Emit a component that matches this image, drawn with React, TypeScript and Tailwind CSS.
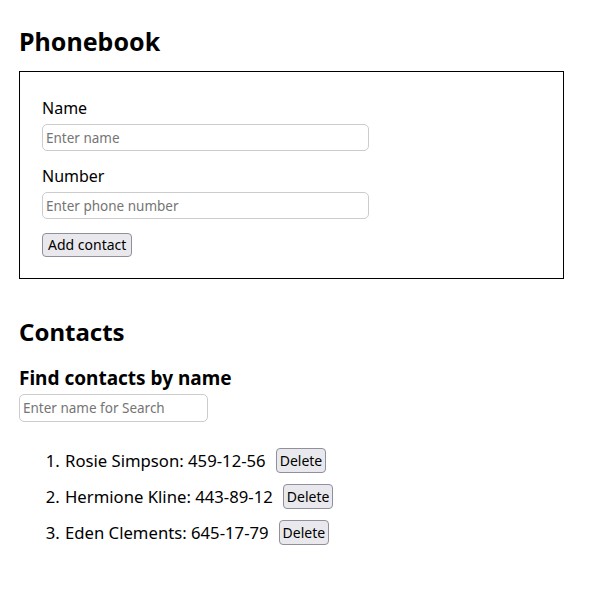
import React from "react";

const contacts = [
  { name: "Rosie Simpson", number: "459-12-56" },
  { name: "Hermione Kline", number: "443-89-12" },
  { name: "Eden Clements", number: "645-17-79" },
];

export default function App() {
  return (
    <div
      className="min-h-[597px] bg-white pl-[19px] pt-[25px] text-black"
      style={{ fontFamily: '"Noto Sans", "Open Sans", sans-serif' }}
    >
      <h1 className="text-[25px] font-bold leading-[32px]">Phonebook</h1>
      <form className="mt-[14px] flex h-[208px] w-[545px] flex-col border border-black px-[22px] pt-[24px]">
        <label className="text-[16px] leading-[24px]">Name</label>
        <input
          placeholder="Enter name"
          className="mt-[4px] h-[27px] w-[327px] rounded-[5px] border border-[#cccccc] px-[3px] text-[13.5px] placeholder:text-[#757575]"
        />
        <label className="mt-[13px] text-[16px] leading-[24px]">Number</label>
        <input
          placeholder="Enter phone number"
          className="mt-[4px] h-[27px] w-[327px] rounded-[5px] border border-[#cccccc] px-[3px] text-[13.5px] placeholder:text-[#757575]"
        />
        <div className="mt-[13px]">
          <button
            type="button"
            className="h-[24px] rounded-[4px] border border-[#8f8f9d] bg-[#e9e9ed] px-[5px] text-[14px] leading-[20px]"
          >
            Add contact
          </button>
        </div>
      </form>
      <h2 className="mt-[37px] text-[24px] font-bold leading-[32px]">Contacts</h2>
      <h3 className="mt-[17px] text-[19px] font-bold leading-[26px]">Find contacts by name</h3>
      <input
        placeholder="Enter name for Search"
        className="mt-[3px] block h-[28px] w-[189px] rounded-[5px] border border-[#cccccc] px-[3px] text-[13.5px] placeholder:text-[#757575]"
      />
      <ol className="mt-[26px] list-decimal pl-[45px] text-[16.7px]">
        {contacts.map((c) => (
          <li key={c.name} className="mb-[11px] h-[25px] pl-[1px] leading-[25px]">
            <span>
              {c.name}: {c.number}
            </span>
            <button
              type="button"
              className="ml-[10px] h-[25px] rounded-[4px] border border-[#8f8f9d] bg-[#e9e9ed] px-[3px] align-top text-[14px] leading-[20px]"
            >
              Delete
            </button>
          </li>
        ))}
      </ol>
    </div>
  );
}
